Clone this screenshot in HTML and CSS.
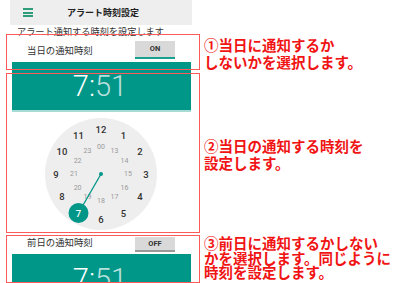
FILE: index.html
```html
<!DOCTYPE html>
<html lang="ja">
<head>
<meta charset="utf-8">
<title>アラート時刻設定</title>
<link rel="stylesheet" href="styles.css">
</head>
<body>
<div class="page">
  <div class="phone">
    <div class="topbar">
      <span class="hamburger"><i></i><i></i><i></i></span>
      <span class="title">アラート時刻設定</span>
      <span></span>
    </div>
    <div class="subtitle">アラート通知する時刻を設定します</div>
    <div class="row row-today">
      <span class="label">当日の通知時刻</span>
      <span class="toggle toggle-on">ON</span>
    </div>
    <div class="timehead"><span class="hh">7:</span><span class="mm">51</span></div>
    <div class="accent"></div>
    <div class="clockarea">
      <svg class="clock" width="179" height="121" viewBox="0 0 179 121">
        <circle cx="89" cy="62" r="56" fill="#eeeeee"/>
        <g class="outer">
          <text x="89" y="17">12</text>
          <text x="111.5" y="23">1</text>
          <text x="128" y="39.5">2</text>
          <text x="134" y="62">3</text>
          <text x="128" y="84.5">4</text>
          <text x="111.5" y="101">5</text>
          <text x="89" y="107">6</text>
          <text x="50" y="84.5">8</text>
          <text x="44" y="62">9</text>
          <text x="50" y="39.5">10</text>
          <text x="66.5" y="23">11</text>
        </g>
        <g class="inner">
          <text x="89" y="35">00</text>
          <text x="102.5" y="38.6">13</text>
          <text x="112.4" y="48.5">14</text>
          <text x="116" y="62">15</text>
          <text x="112.4" y="75.5">16</text>
          <text x="102.5" y="85.4">17</text>
          <text x="89" y="89">18</text>
          <text x="75.5" y="85.4">19</text>
          <text x="65.6" y="75.5">20</text>
          <text x="62" y="62">21</text>
          <text x="65.6" y="48.5">22</text>
          <text x="75.5" y="38.6">23</text>
        </g>
        <line x1="89" y1="62" x2="66.5" y2="101" stroke="#009688" stroke-width="1.3"/>
        <circle cx="89" cy="62" r="2" fill="#009688"/>
        <circle cx="66.5" cy="101" r="10" fill="#009688"/>
        <text class="sel" x="66.5" y="101">7</text>
      </svg>
    </div>
    <div class="row row-prev">
      <span class="label">前日の通知時刻</span>
      <span class="toggle toggle-off">OFF</span>
    </div>
    <div class="timehead timehead-2"><span class="hh">7:</span><span class="mm">51</span></div>
  </div>

  <div class="notes">
    <p class="note note-1">①当日に通知するか<br>しないかを選択します。</p>
    <p class="note note-2">②当日の通知する時刻を<br>設定します。</p>
    <p class="note note-3">③前日に通知するかしない<br>かを選択します。同じように<br>時刻を設定します。</p>
  </div>

  <div class="mark mark-1"></div>
  <div class="mark mark-2"></div>
  <div class="mark mark-3"></div>
</div>
</body>
</html>
```

FILE: styles.css
```css
html, body {
  margin: 0;
  padding: 0;
  background: #ffffff;
}
body {
  width: 400px;
  height: 283px;
  overflow: hidden;
  font-family: "Noto Sans CJK JP", "Noto Sans", sans-serif;
}
.page {
  position: relative;
  display: flex;
  align-items: flex-start;
  width: 400px;
  height: 283px;
  overflow: hidden;
}
.phone {
  width: 182px;
  margin-left: 10px;
  display: flex;
  flex-direction: column;
  flex: none;
}
.phone > * {
  flex: none;
}
.topbar {
  height: 25px;
  background: #eeeeee;
  display: grid;
  grid-template-columns: 1fr auto 1fr;
  align-items: center;
}
.hamburger {
  display: flex;
  flex-direction: column;
  gap: 1.6px;
  width: 10px;
  margin-left: 13px;
}
.hamburger i {
  display: block;
  height: 2px;
  background: #2f9d7b;
}
.title {
  font-size: 9px;
  font-weight: 700;
  color: #222;
  line-height: 25px;
  margin-left: 4px;
}
.subtitle {
  height: 12px;
  font-size: 9.2px;
  line-height: 12px;
  color: #333;
  padding-left: 7px;
  white-space: nowrap;
  overflow: visible;
}
.row {
  display: flex;
  justify-content: space-between;
  padding: 0 17px;
}
.row-today {
  height: 25px;
  align-items: center;
}
.row-prev {
  height: 21px;
  align-items: flex-start;
}
.label {
  font-size: 9.4px;
  line-height: 14px;
  color: #333;
}
.row-today .label { margin-top: 1px; }
.row-prev .label { margin-top: 2px; }
.toggle {
  width: 40px;
  background: #d9d9d9;
  font-family: Roboto, "Liberation Sans", sans-serif;
  font-weight: 700;
  font-size: 7.5px;
  line-height: 10px;
  color: #333;
  display: flex;
  align-items: center;
  justify-content: center;
  box-sizing: border-box;
}
.toggle-on {
  height: 18px;
  border-bottom: 2px solid #1aa08e;
}
.toggle-off {
  height: 15px;
  margin-top: 4px;
  border-bottom: 2px solid #999;
}
.timehead {
  height: 48px;
  margin: 0 1px 0 2px;
  background: #009688;
  text-align: center;
  font-family: Roboto, "Liberation Sans", sans-serif;
  font-weight: 300;
  font-size: 29px;
  line-height: 49px;
  color: #fff;
  padding-right: 3px;
}
.timehead .mm {
  color: rgba(255, 255, 255, 0.72);
}
.timehead-2 {
  height: 40px;
  line-height: 50px;
}
.accent {
  height: 2px;
  margin: 0 1px 0 2px;
  background: #a6dcd3;
}
.clockarea {
  height: 121px;
  margin-left: 2px;
}
.clock {
  display: block;
}
.clock text {
  font-family: Roboto, "Liberation Sans", sans-serif;
  text-anchor: middle;
  dominant-baseline: central;
}
.outer text {
  font-size: 9.5px;
  font-weight: 500;
  fill: #333;
}
.inner text {
  font-size: 7px;
  fill: #999;
}
.clock .sel {
  font-size: 9.5px;
  font-weight: 500;
  fill: #fff;
}
.notes {
  margin-left: 12px;
  display: flex;
  flex-direction: column;
  color: #f01414;
  font-weight: 700;
  font-size: 14.5px;
  white-space: nowrap;
  flex: none;
}
.note {
  margin: 0;
}
.note-1 {
  margin-top: 37px;
  line-height: 16.5px;
}
.note-2 {
  margin-top: 67px;
  line-height: 17px;
}
.note-3 {
  margin-top: 65px;
  line-height: 14.5px;
}
.mark {
  position: absolute;
  left: 6px;
  width: 194px;
  border: 1.5px solid #ff5a5a;
  box-sizing: border-box;
}
.mark-1 { top: 34px; height: 36px; }
.mark-2 { top: 73px; height: 160px; }
.mark-3 { top: 235px; height: 48px; }
```
